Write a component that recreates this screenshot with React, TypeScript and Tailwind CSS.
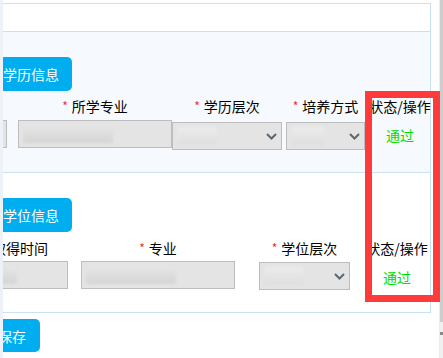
import * as React from "react";

type ColProps = {
  width: number;
  ml: number;
  label?: string;
  star?: boolean;
  children?: React.ReactNode;
  className?: string;
};

// one column of the form row: label on top, control below, both centred
function Col({ ml, label, star = true, children, className }: ColProps) {
  return (
    <div className={`flex shrink-0 flex-col items-center ${className ?? ""}`} style={{ marginLeft: ml }}>
      <div className="flex h-[20px] items-center whitespace-nowrap leading-[20px]">
        {label && star ? <span className="mr-[4px] text-[12px] leading-[12px] text-[#f03030]">*</span> : null}
        {label}
      </div>
      {children}
    </div>
  );
}

function Blob({ w, dark = false }: { w: number; dark?: boolean }) {
  return (
    <div
      className={`h-[18px] rounded-[3px] blur-[1.5px] ${
        dark ? "bg-gradient-to-b from-[#e6e6e6] to-[#d4d4d4]" : "bg-gradient-to-b from-[#ececec] to-[#dedede]"
      }`}
      style={{ width: w }}
    />
  );
}

function TextBox({ w, blob, className }: { w: number; blob?: number; className?: string }) {
  return (
    <div
      className={`flex h-[28px] items-center border border-[#bdbdbd] bg-[#e4e4e4] px-[4px] ${className ?? ""}`}
      style={{ width: w }}
    >
      {blob ? <Blob w={blob} dark /> : null}
    </div>
  );
}

function SelectBox({ w, blob, className }: { w: number; blob?: number; className?: string }) {
  return (
    <div
      className={`flex h-[28px] items-center justify-between border border-[#bdbdbd] bg-[#e4e4e4] pl-[4px] pr-[4px] ${className ?? ""}`}
      style={{ width: w }}
    >
      {blob ? <Blob w={blob} /> : <span />}
      <svg width="11" height="7" viewBox="0 0 11 7" className="shrink-0">
        <polyline points="1,1 5.5,5.5 10,1" fill="none" stroke="#5b6770" strokeWidth="2" />
      </svg>
    </div>
  );
}

function Status({ ml, width }: { ml: number; width: number }) {
  return (
    <div className="flex shrink-0 flex-col items-center" style={{ marginLeft: ml, width }}>
      <div className="h-[20px] whitespace-nowrap leading-[20px]">状态/操作</div>
      <div className="mt-[9px] h-[20px] leading-[20px] text-[#00dd00]">通过</div>
    </div>
  );
}

function BlueButton({ children, className }: { children: React.ReactNode; className?: string }) {
  return (
    <div className={`flex items-center rounded-r-[5px] bg-[#00aeef] text-white ${className ?? ""}`}>{children}</div>
  );
}

export default function App() {
  return (
    <div className="relative flex h-[358px] w-[443px] overflow-hidden bg-white font-['Noto_Sans_CJK_SC',sans-serif] text-[14px] text-black">
      <div className="w-[3px] shrink-0 bg-[#eef2f8]" />

      <div className="w-[436px] shrink-0 overflow-hidden">
        <div className="mt-[3px] w-[428px] border-t border-r border-[#c9e2f3]">
          <div className="h-[28px] border-b border-[#c9e2f3]" />

          {/* 学历信息 */}
          <div className="h-[141px] border-b border-[#c9e2f3] bg-[#f6fafe] pt-[25px]">
            <BlueButton className="-ml-[12px] h-[34px] w-[81px] pl-[12px] leading-[20px]">学历信息</BlueButton>
            <div className="mt-[5px] flex items-start">
              <Col width={40} ml={-36}>
                <TextBox w={40} className="mt-[4px]" />
              </Col>
              <Col width={154} ml={11} label="所学专业">
                <TextBox w={154} blob={90} className="mt-[4px]" />
              </Col>
              <Col width={110} ml={0} label="学历层次">
                <SelectBox w={110} blob={40} className="mt-[6px]" />
              </Col>
              <Col width={79} ml={4} label="培养方式">
                <SelectBox w={79} blob={34} className="mt-[6px]" />
              </Col>
              <Status ml={2} width={66} />
            </div>
          </div>

          {/* 学位信息 */}
          <div className="h-[140px] border-b border-[#c9e2f3] pt-[25px]">
            <BlueButton className="-ml-[12px] h-[34px] w-[81px] pl-[12px] leading-[20px]">学位信息</BlueButton>
            <div className="mt-[6px] flex items-start">
              <Col width={96} ml={-31} label="取得时间" star={false}>
                <TextBox w={96} blob={40} className="mt-[3px]" />
              </Col>
              <Col width={154} ml={13} label="专业">
                <TextBox w={154} blob={90} className="mt-[3px]" />
              </Col>
              <Col width={91} ml={24} label="学位层次">
                <SelectBox w={91} blob={40} className="mt-[4px] h-[27px]" />
              </Col>
              <Status ml={15} width={64} />
            </div>
          </div>
        </div>

        <BlueButton className="-ml-[20px] mt-[6px] h-[33px] w-[57px] pl-[15px] leading-[20px]">保存</BlueButton>
      </div>

      {/* scrollbar */}
      <div className="flex w-[4px] shrink-0 flex-col border-l border-[#ececec] bg-[#f0f0f0]">
        <div className="h-[322px] bg-[#cdcdcd]" />
        <div className="mt-[10px] h-[3px] bg-[#8a8a8a]" />
      </div>

      {/* red highlight frame */}
      <div className="absolute left-[365px] top-[91px] h-[211px] w-[75px] border-[7px] border-[#fe3a3a]" />
    </div>
  );
}
